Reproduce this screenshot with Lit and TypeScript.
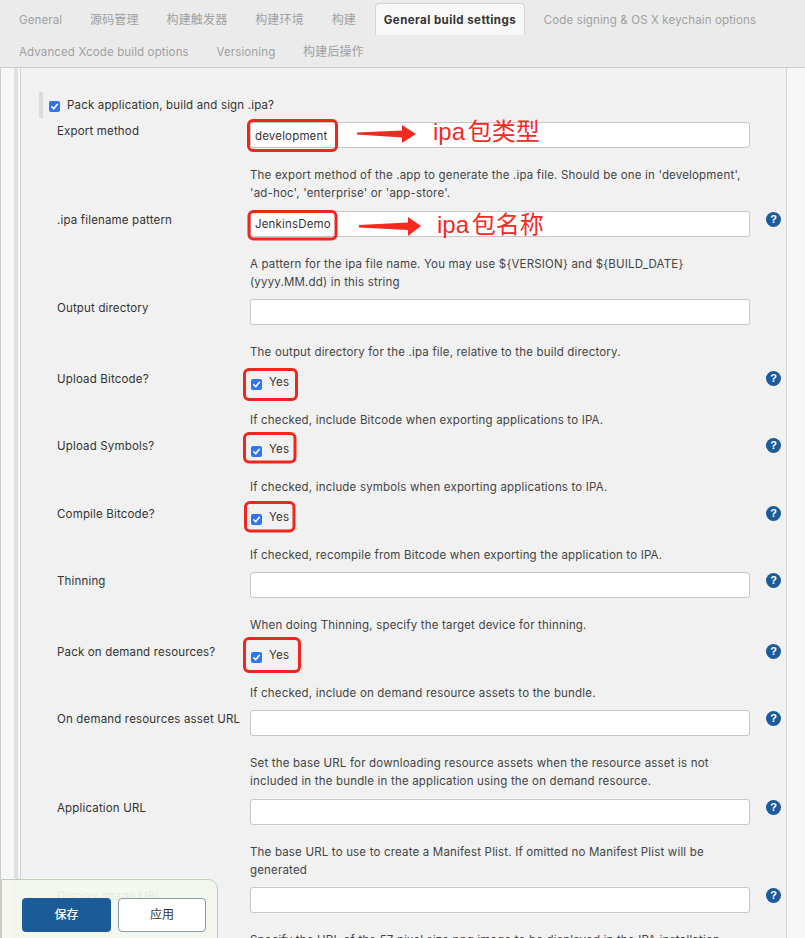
import { LitElement, html, css, svg } from "lit";
import { customElement } from "lit/decorators.js";

type Field = { label: string; kind: "input" | "check"; value?: string; help?: string[]; q?: boolean };

const FIELDS: Field[] = [
  { label: "Export method", kind: "input", value: "development", help: ["The export method of the .app to generate the .ipa file. Should be one in 'development',", "'ad-hoc', 'enterprise' or 'app-store'."] },
  { label: ".ipa filename pattern", kind: "input", value: "JenkinsDemo", q: true, help: ["A pattern for the ipa file name. You may use ${VERSION} and ${BUILD_DATE}", "(yyyy.MM.dd) in this string"] },
  { label: "Output directory", kind: "input", help: ["The output directory for the .ipa file, relative to the build directory."] },
  { label: "Upload Bitcode?", kind: "check", q: true, help: ["If checked, include Bitcode when exporting applications to IPA."] },
  { label: "Upload Symbols?", kind: "check", q: true, help: ["If checked, include symbols when exporting applications to IPA."] },
  { label: "Compile Bitcode?", kind: "check", q: true, help: ["If checked, recompile from Bitcode when exporting the application to IPA."] },
  { label: "Thinning", kind: "input", q: true, help: ["When doing Thinning, specify the target device for thinning."] },
  { label: "Pack on demand resources?", kind: "check", q: true, help: ["If checked, include on demand resource assets to the bundle."] },
  { label: "On demand resources asset URL", kind: "input", q: true, help: ["Set the base URL for downloading resource assets when the resource asset is not", "included in the bundle in the application using the on demand resource."] },
  { label: "Application URL", kind: "input", q: true, help: ["The base URL to use to create a Manifest Plist. If omitted no Manifest Plist will be", "generated"] },
  { label: "Display image URL", kind: "input", q: true, help: ["Specify the URL of the 57 pixel size png image to be displayed in the IPA installation", "page."] },
];

const TABS = ["General", "源码管理", "构建触发器", "构建环境", "构建", "General build settings", "Code signing & OS X keychain options", "Advanced Xcode build options", "Versioning", "构建后操作"];

const BOXES = [
  [248.5, 120.5, 88, 30], [249, 211.5, 87, 27.5], [244.5, 369.5, 52, 30], [244.5, 433.5, 50.5, 28.5],
  [245.5, 502.5, 48.5, 28.5], [244.5, 638.5, 55, 33],
];

@customElement("app-root")
export class AppRoot extends LitElement {
  static styles = css`
    :host {
      display: block;
      position: relative;
      height: 938px;
      overflow: hidden;
      font-family: Inter, "Noto Sans CJK SC", sans-serif;
      font-size: 11.5px;
      line-height: 18px;
      color: #333;
      background: #f7f7f7;
    }
    .tabs {
      display: flex;
      flex-wrap: wrap;
      align-content: flex-start;
      height: 64px;
      padding: 3px 0 0 5.15px;
      background: #ebebeb;
      border-bottom: 1px solid #ccc;
    }
    .tab {
      height: 32px;
      margin: 0 4.85px;
      padding: 0 8px;
      box-sizing: border-box;
      display: flex;
      align-items: center;
      color: #a0a0a0;
      letter-spacing: 0.13px;
      border: 1px solid transparent;
      border-bottom: 0;
      white-space: nowrap;
    }
    .tab.cjk { font-size: 12px; letter-spacing: 0.2px; }
    .tab.active {
      color: #333;
      font-weight: 700;
      letter-spacing: 0.45px;
      background: #f8f8f8;
      border-color: #d4d4d4;
      border-radius: 4px 4px 0 0;
    }
    .break { flex-basis: 100%; height: 0; }
    .page { display: flex; height: 870px; }
    .gutter { flex: none; width: 20px; display: flex; border-left: 1px solid #ccc; box-sizing: border-box; }
    .gutter i { display: block; width: 13px; }
    .gutter b { display: block; width: 4px; background: #e0e0e0; }
    .main {
      flex: none;
      width: 767px;
      box-sizing: border-box;
      border-left: 1px solid #d2d2d2;
      border-right: 1px solid #d2d2d2;
      background: #f1f1f1;
      padding: 24px 0 0 36px;
    }
    .pack {
      display: flex;
      align-items: center;
      height: 26px;
      margin: 0 0 4px -18px;
      border-left: 4px solid #dcdcdc;
      padding-left: 6px;
    }
    .pack .box { margin: 3px 7px 0 0; }
    .field {
      display: grid;
      grid-template-columns: 193px 500px 32px;
      padding-bottom: 8.5px;
    }
    .label { white-space: nowrap; letter-spacing: 0.17px; }
    .input {
      box-sizing: border-box;
      height: 26px;
      background: #fff;
      border: 1px solid #c6c6c6;
      border-radius: 3px;
      padding: 1px 4px 0;
      display: flex;
      align-items: center;
      font-size: 11.5px;
      letter-spacing: 0.17px;
      color: #333;
    }
    .yes { height: 23px; display: flex; padding-left: 1px; }
    .yes .txt { margin: 3px 0 0 7px; letter-spacing: 0.2px; }
    .box {
      flex: none;
      width: 11px;
      height: 11px;
      border-radius: 2px;
      background: #2f74f0;
      display: flex;
      margin-top: 9px;
    }
    .box svg { width: 11px; height: 11px; display: block; }
    .q {
      justify-self: end;
      margin: 1px 1px 0 0;
      width: 15px;
      height: 15px;
      border-radius: 50%;
      background: #1c5b99;
      color: #fff;
      font-family: "Liberation Sans", sans-serif;
      font-size: 11px;
      font-weight: 700;
      line-height: 15px;
      text-align: center;
    }
    .help {
      grid-column: 2 / 4;
      margin-top: 18px;
      color: #444;
      letter-spacing: 0.18px;
      white-space: nowrap;
    }
    .right { flex: 1; }
    .bar {
      position: absolute;
      left: 1px;
      top: 879px;
      width: 217px;
      height: 70px;
      box-sizing: border-box;
      background: rgba(243, 247, 238, 0.92);
      border: 1px solid #b4d2bb;
      border-radius: 0 10px 0 0;
      padding: 18px 0 0 20px;
      display: flex;
      gap: 7px;
    }
    .btn {
      box-sizing: border-box;
      width: 89px;
      height: 34px;
      border-radius: 4px;
      display: flex;
      align-items: center;
      justify-content: center;
      font-size: 12px;
    }
    .btn.save { background: #1c5b99; color: #fff; font-weight: 500; }
    .btn.apply { width: 88px; background: #fff; border: 1px solid #8a9ba8; color: #333; }
    .marks { position: absolute; left: 0; top: 0; width: 805px; height: 938px; pointer-events: none; }
    .note {
      position: absolute;
      font-family: "Liberation Sans", "Noto Sans CJK SC", sans-serif;
      font-size: 24px;
      line-height: 30px;
      word-spacing: -4px;
      color: #f5291f;
      white-space: nowrap;
    }
    .note.a { left: 433px; top: 117px; }
    .note.b { left: 437px; top: 210px; }
  `;

  private check() {
    return html`<span class="box"><svg viewBox="0 0 11 11"><path d="M2.8 5.8 4.7 7.8 8.3 3.3" fill="none" stroke="#fff" stroke-width="1.6" stroke-linecap="round" stroke-linejoin="round"/></svg></span>`;
  }

  private tab(t: string, i: number) {
    const cjk = [1, 2, 3, 4, 9].includes(i);
    return html`${i === 7 ? html`<span class="break"></span>` : ""}<div class="tab ${i === 5 ? "active" : ""} ${cjk ? "cjk" : ""}">${t}</div>`;
  }

  private field(f: Field) {
    return html`<div class="field">
      <div class="label">${f.label}</div>
      ${f.kind === "input"
        ? html`<div class="input">${f.value ?? ""}</div>`
        : html`<div class="yes">${this.check()}<span class="txt">Yes</span></div>`}
      ${f.q ? html`<div class="q">?</div>` : html`<div></div>`}
      <div class="help">${f.help?.map((l) => html`<div>${l}</div>`)}</div>
    </div>`;
  }

  render() {
    return html`
      <div class="tabs">${TABS.map((t, i) => this.tab(t, i))}</div>
      <div class="page">
        <div class="gutter"><i></i><b></b></div>
        <div class="main">
          <div class="pack">${this.check()}<span class="label">Pack application, build and sign .ipa?</span></div>
          ${FIELDS.map((f) => this.field(f))}
        </div>
        <div class="right"></div>
      </div>
      <svg class="marks" viewBox="0 0 805 938">
        ${BOXES.map(
          ([x, y, w, h]) => svg`<rect x=${x} y=${y} width=${w} height=${h} rx="4.5" fill="none" stroke="#f0251c" stroke-width="3"/>`
        )}
        <path d="M357 132.5 402 130.5 402 125 416 134 402 143 402 137.5 357 134.5Z" fill="#f5291f"/>
        <path d="M359 225 408 222.5 408 217 421 226 408 236 408 230 359 227.5Z" fill="#f5291f"/>
      </svg>
      <div class="note a">ipa 包类型</div>
      <div class="note b">ipa 包名称</div>
      <div class="bar">
        <div class="btn save">保存</div>
        <div class="btn apply">应用</div>
      </div>
    `;
  }
}
